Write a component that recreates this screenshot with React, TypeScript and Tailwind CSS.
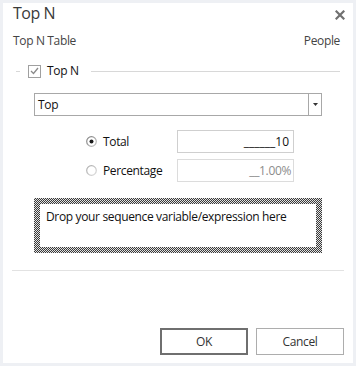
import React from 'react';

const CloseIcon = () => (
  <svg width="10" height="10" viewBox="0 0 10 10">
    <path d="M1.5 1.5 L8.5 8.5 M8.5 1.5 L1.5 8.5" stroke="#707070" strokeWidth="2.2" strokeLinecap="square" />
  </svg>
);

const Radio: React.FC<{ checked?: boolean }> = ({ checked }) => (
  <svg width="11" height="11" viewBox="0 0 11 11">
    <defs>
      <linearGradient id={checked ? 'rg1' : 'rg2'} x1="0" y1="0" x2="1" y2="1">
        <stop offset="0" stopColor={checked ? '#7a7a7a' : '#a8a8a8'} />
        <stop offset="1" stopColor={checked ? '#c8c8c8' : '#dedede'} />
      </linearGradient>
    </defs>
    <circle cx="5.5" cy="5.5" r="4.8" fill="#fff" stroke={`url(#${checked ? 'rg1' : 'rg2'})`} strokeWidth="1.2" />
    {checked && <circle cx="5.5" cy="5.5" r="2" fill="#1a1a1a" />}
  </svg>
);

const App: React.FC = () => {
  return (
    <div className="w-[356px] h-[366px] bg-[#eef0f4] p-[3px] font-['Open_Sans',sans-serif]">
      <div className="h-full bg-white flex flex-col px-[9px] pb-[8px]">
        {/* Title bar */}
        <div className="flex items-start justify-between">
          <span className="text-[16px] leading-[20px] tracking-[-0.5px] text-[#3a3a3a] pl-[1px]">Top N</span>
          <span className="mt-[7px] mr-[-1px]">
            <CloseIcon />
          </span>
        </div>

        {/* Table / subject */}
        <div className="mt-[10px] flex justify-between text-[12px] leading-[16px] tracking-[-0.35px] text-[#444]">
          <span className="pl-[1px]">Top N Table</span>
          <span className="pr-[4px]">People</span>
        </div>

        {/* Group header */}
        <div className="mt-[13px] h-[18px] flex items-center">
          <div className="w-[4px] h-px bg-[#d8d8d8] ml-[4px]" />
          <div className="ml-[8px] w-[13px] h-[13px] border border-[#a0a0a0] flex items-center justify-center">
            <svg width="9" height="8" viewBox="0 0 9 8">
              <path d="M1 4 L3.5 6.5 L8 1" fill="none" stroke="#8a8a8a" strokeWidth="1.3" />
            </svg>
          </div>
          <span className="ml-[6px] text-[12px] leading-[16px] tracking-[-0.35px] text-[#111]">Top N</span>
          <div className="ml-[12px] mr-[4px] flex-1 h-px bg-[#d8d8d8]" />
        </div>

        {/* Dropdown */}
        <div className="mt-[13px] ml-[22px] w-[288px] h-[23px] border border-[#a8a8a8] flex">
          <span className="flex-1 pl-[3px] text-[12px] leading-[21px] tracking-[-0.35px] text-[#111]">Top</span>
          <div className="w-[13px] border-l border-[#a8a8a8] flex items-center justify-center">
            <svg width="5" height="3" viewBox="0 0 5 3">
              <path d="M0 0 L5 0 L2.5 3 Z" fill="#333" />
            </svg>
          </div>
        </div>

        {/* Radio options */}
        <div className="mt-[14px] ml-[74px] flex flex-col gap-[6px] text-[12px] tracking-[-0.35px]">
          <div className="flex items-center">
            <div className="w-[91px] flex items-center">
              <Radio checked />
              <span className="ml-[6px] leading-[16px] text-[#111]">Total</span>
            </div>
            <div className="w-[117px] h-[23px] border border-[#cfcfcf] flex items-center justify-end pr-[4px] leading-[16px] text-[#111] tracking-normal">
              ______10
            </div>
          </div>
          <div className="flex items-center">
            <div className="w-[91px] flex items-center">
              <Radio />
              <span className="ml-[6px] leading-[16px] text-[#111]">Percentage</span>
            </div>
            <div className="w-[117px] h-[23px] border border-[#dcdcdc] flex items-center justify-end pr-[2px] leading-[16px] text-[#8c8c8c]">
              __1.00%
            </div>
          </div>
        </div>

        {/* Drop zone */}
        <div className="mt-[16px] ml-[22px] w-[288px] h-[55px] p-[6px] bg-[repeating-conic-gradient(#3a3a3a_0%_25%,#e2e2e2_0%_50%)] bg-[length:2px_2px]">
          <div className="h-full bg-white pl-[6px] pt-[5px] text-[12px] leading-[16px] tracking-[-0.35px] text-[#111]">
            Drop your sequence variable/expression here
          </div>
        </div>

        <div className="mt-[17px] h-px bg-[#e2e2e2]" />

        {/* Buttons */}
        <div className="mt-auto flex justify-end gap-[8px] text-[12px] tracking-[-0.35px]">
          <button className="w-[88px] h-[27px] border-2 border-[#6f6f6f] bg-white text-[#333]">OK</button>
          <button className="w-[88px] h-[27px] border border-[#adadad] bg-white text-[#333]">Cancel</button>
        </div>
      </div>
    </div>
  );
};

export default App;
